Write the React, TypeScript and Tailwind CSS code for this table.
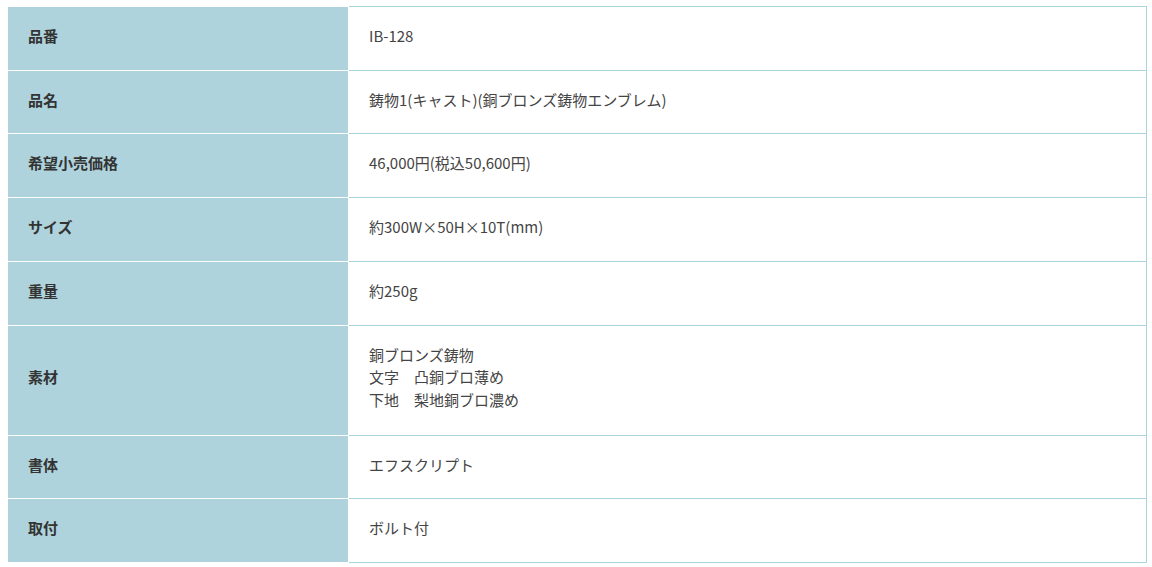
import React from "react";

const rows: { label: string; value: string[] }[] = [
  { label: "品番", value: ["IB-128"] },
  { label: "品名", value: ["鋳物1(キャスト)(銅ブロンズ鋳物エンブレム)"] },
  { label: "希望小売価格", value: ["46,000円(税込50,600円)"] },
  { label: "サイズ", value: ["約300W×50H×10T(mm)"] },
  { label: "重量", value: ["約250g"] },
  { label: "素材", value: ["銅ブロンズ鋳物", "文字　凸銅ブロ薄め", "下地　梨地銅ブロ濃め"] },
  { label: "書体", value: ["エフスクリプト"] },
  { label: "取付", value: ["ボルト付"] },
];

const App = () => {
  return (
    <div
      className="min-h-screen bg-white pt-[6px] pl-[7px]"
      style={{ fontFamily: '"Noto Sans CJK JP", "Noto Sans", sans-serif' }}
    >
      <div className="w-[1140px] text-[15px] leading-[22.7px]">
        {rows.map((row, i) => (
          <div key={row.label} className="flex">
            {/* label cell */}
            <div
              className={`w-[342px] shrink-0 flex items-center bg-[#afd3dc] border-l border-r border-b border-white px-[20px] pt-[18px] font-bold text-[#333] ${
                i === 0 ? "border-t" : ""
              } ${row.value.length > 1 ? "pb-[23px]" : "pb-[22px]"}`}
            >
              {row.label}
            </div>
            {/* value cell */}
            <div
              className={`flex-1 flex flex-col justify-center border-r border-b border-[#a9d5dc] px-[20px] pt-[18px] text-[#444] ${
                i === 0 ? "border-t" : ""
              } ${row.value.length > 1 ? "pb-[23px]" : "pb-[22px]"}`}
            >
              {row.value.map((line) => (
                <div key={line}>{line}</div>
              ))}
            </div>
          </div>
        ))}
      </div>
    </div>
  );
};

export default App;
